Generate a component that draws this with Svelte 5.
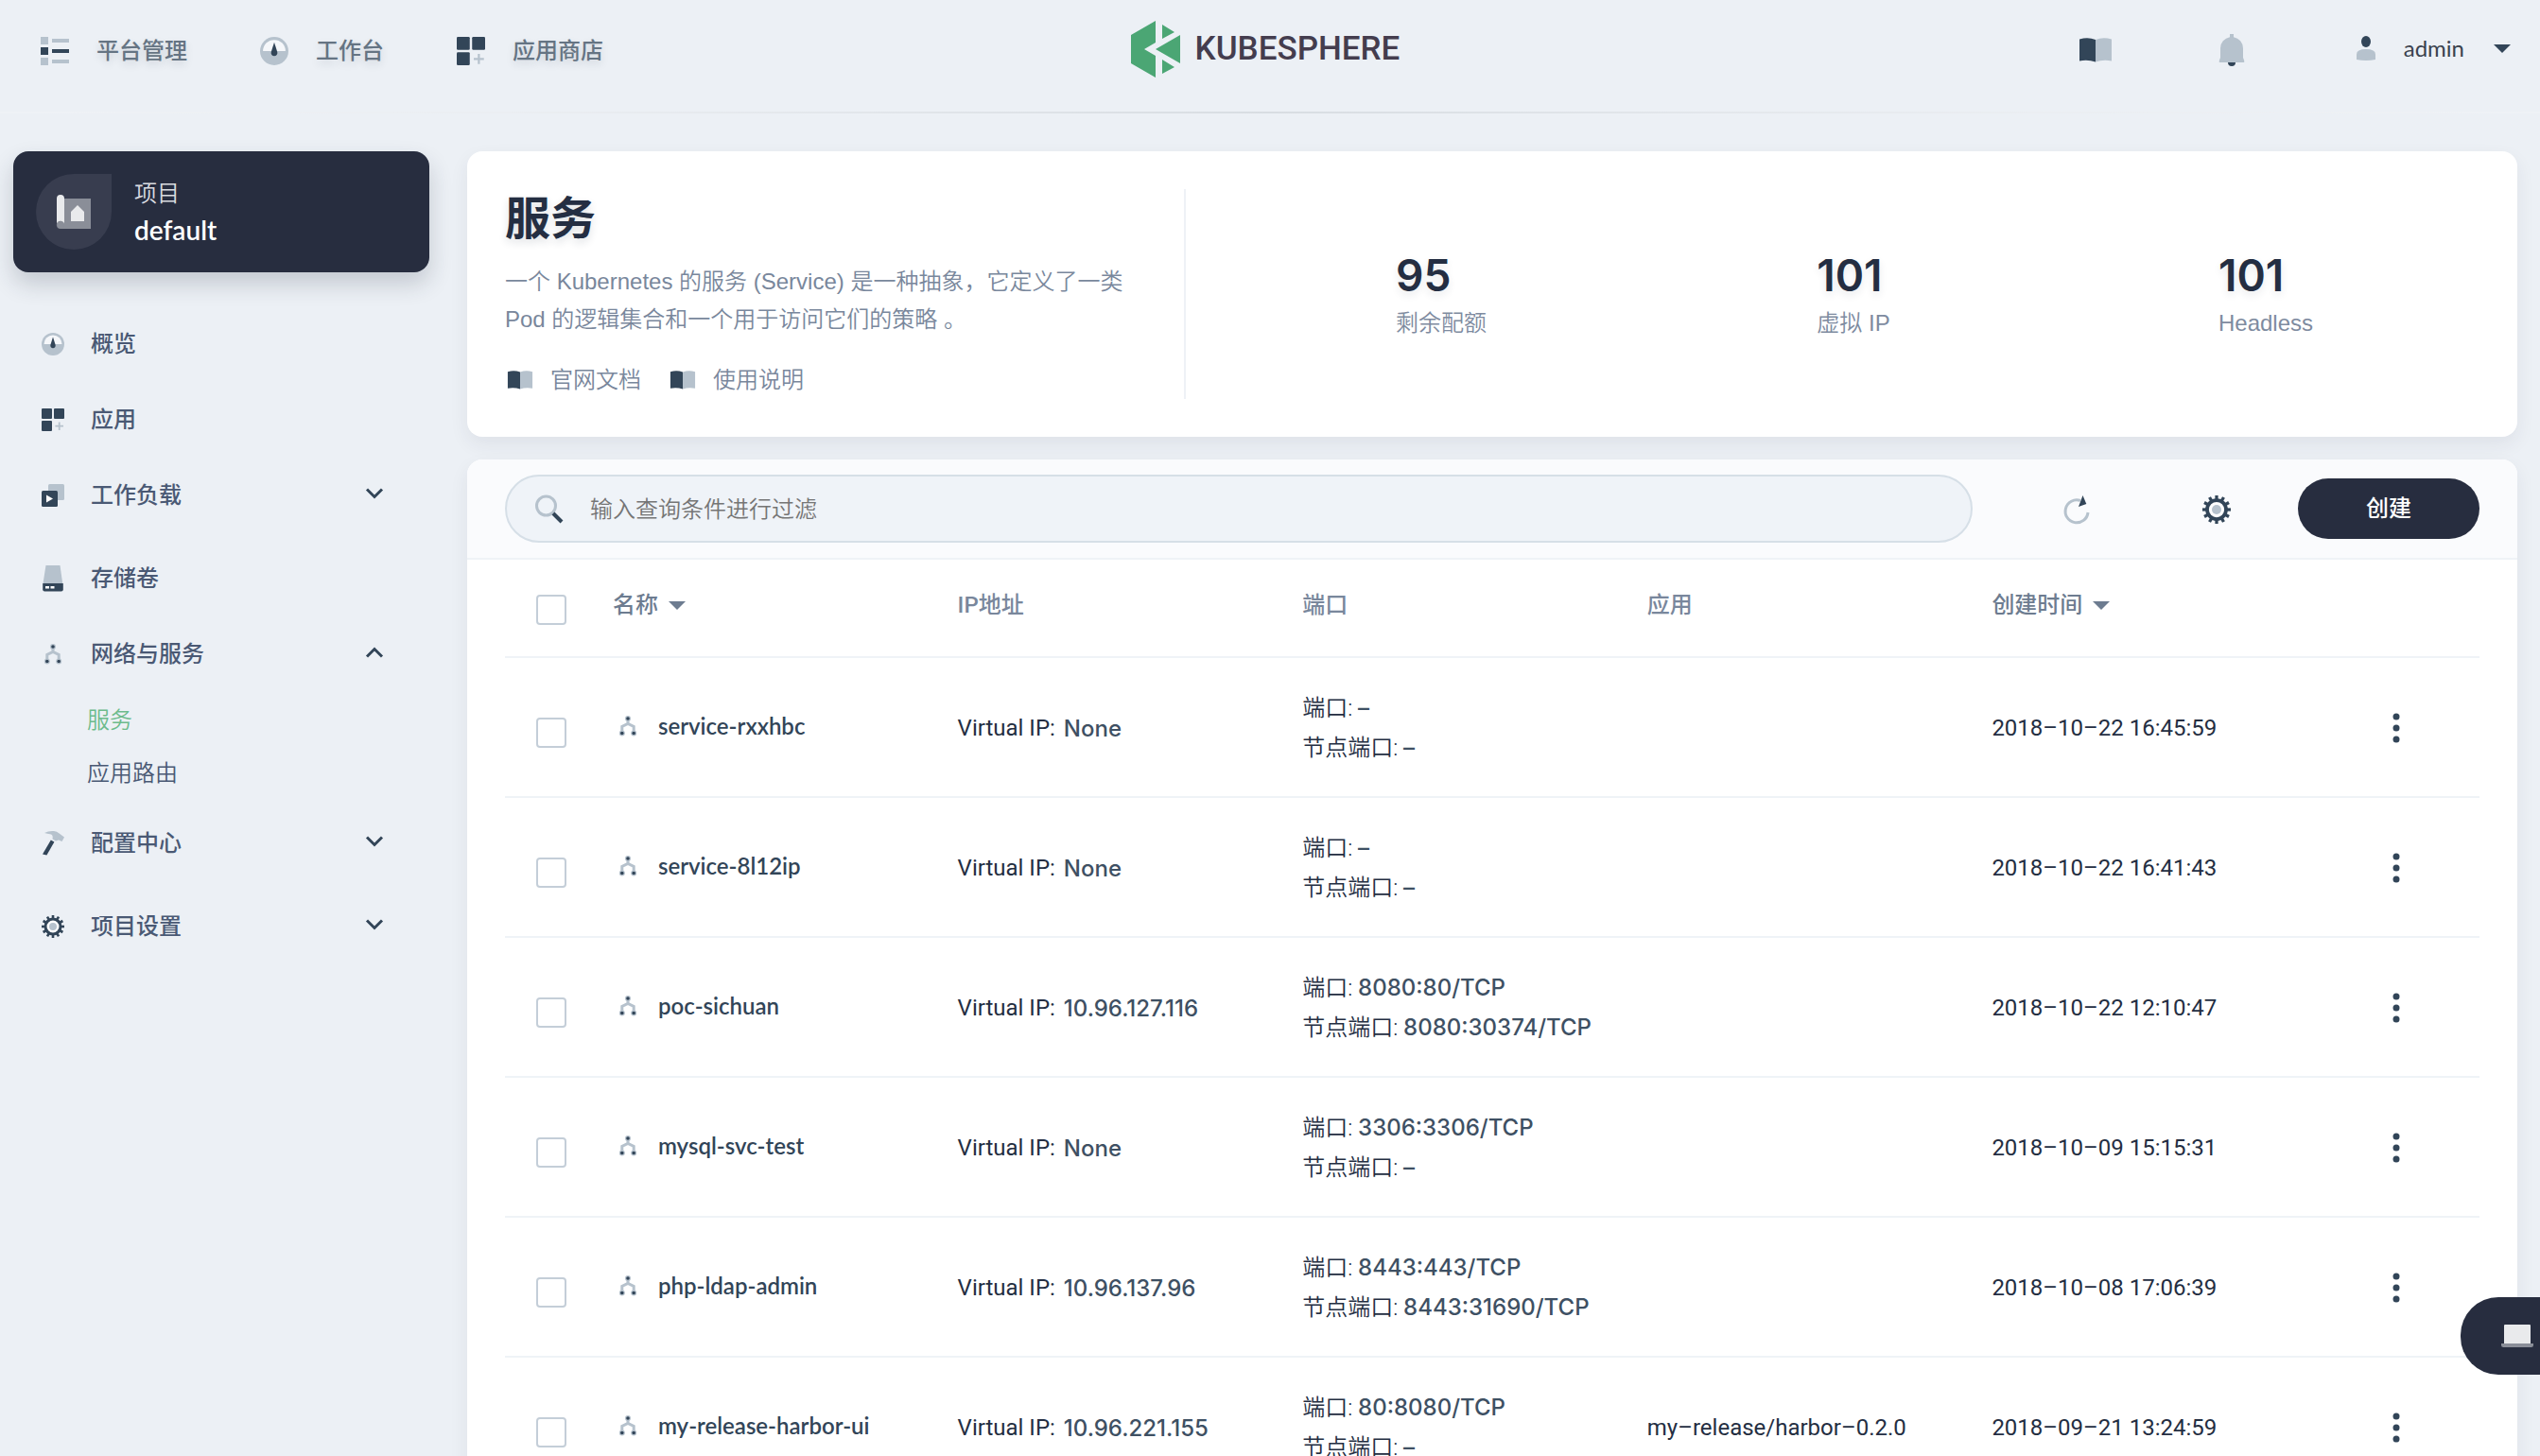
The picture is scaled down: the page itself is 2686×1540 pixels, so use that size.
<script>
  const topLinks = [
    { icon: 'list', label: '平台管理' },
    { icon: 'gauge', label: '工作台' },
    { icon: 'apps', label: '应用商店' }
  ];

  const menu = [
    { icon: 'gauge', label: '概览' },
    { icon: 'apps', label: '应用' },
    { icon: 'workload', label: '工作负载', children: [] },
    { icon: 'disk', label: '存储卷' },
    {
      icon: 'network',
      label: '网络与服务',
      open: true,
      children: [{ label: '服务', active: true }, { label: '应用路由' }]
    },
    { icon: 'hammer', label: '配置中心', children: [] },
    { icon: 'gear', label: '项目设置', children: [] }
  ];

  const stats = [
    { value: '95', label: '剩余配额' },
    { value: '101', label: '虚拟 IP' },
    { value: '101', label: 'Headless' }
  ];

  const services = [
    { name: 'service-rxxhbc', ip: 'None', port: '–', nodePort: '–', app: '', time: '2018–10–22 16:45:59' },
    { name: 'service-8l12ip', ip: 'None', port: '–', nodePort: '–', app: '', time: '2018–10–22 16:41:43' },
    { name: 'poc-sichuan', ip: '10.96.127.116', port: '8080:80/TCP', nodePort: '8080:30374/TCP', app: '', time: '2018–10–22 12:10:47' },
    { name: 'mysql-svc-test', ip: 'None', port: '3306:3306/TCP', nodePort: '–', app: '', time: '2018–10–09 15:15:31' },
    { name: 'php-ldap-admin', ip: '10.96.137.96', port: '8443:443/TCP', nodePort: '8443:31690/TCP', app: '', time: '2018–10–08 17:06:39' },
    { name: 'my-release-harbor-ui', ip: '10.96.221.155', port: '80:8080/TCP', nodePort: '–', app: 'my–release/harbor–0.2.0', time: '2018–09–21 13:24:59' }
  ];

  const teeth = Array.from({ length: 12 }, (_, i) => i * 30);
</script>

{#snippet icon(name)}
  {#if name === 'list'}
    <svg class="icon" viewBox="0 0 30 30" aria-hidden="true">
      <path class="light" d="M0 0h8v8H0zM0 22h8v8H0zM12 2h18v4H12zM12 24h18v4H12z" />
      <path class="dark" d="M0 11h8v8H0zM12 13h18v4H12z" />
    </svg>
  {:else if name === 'gauge'}
    <svg class="icon" viewBox="0 0 24 24" aria-hidden="true">
      <circle class="light" cx="12" cy="12" r="12" />
      <path class="pale" d="M2.5 12a9.5 9.5 0 0 1 19 0z" />
      <path class="dark" d="M12 4.5l2.6 8.3a2.7 2.7 0 1 1-5.2 0z" />
    </svg>
  {:else if name === 'apps'}
    <svg class="icon" viewBox="0 0 24 24" aria-hidden="true">
      <rect class="dark" width="11" height="11" rx="1" />
      <rect class="dark" x="13" width="11" height="11" rx="1" />
      <rect class="dark" y="13" width="11" height="11" rx="1" />
      <path class="light" d="M17.8 14.4h1.8v3.4H23v1.8h-3.4V23h-1.8v-3.4h-3.4v-1.8h3.4z" />
    </svg>
  {:else if name === 'workload'}
    <svg class="icon" viewBox="0 0 24 24" aria-hidden="true">
      <rect class="light" x="7" width="17" height="17" rx="1.5" />
      <rect class="dark" y="7" width="17" height="17" rx="1.5" />
      <path class="white" d="M5 11.5l7 4-7 4z" />
    </svg>
  {:else if name === 'disk'}
    <svg class="icon tall" viewBox="0 0 24 28" aria-hidden="true">
      <path class="light" d="M4.5 0h15l2.7 19H1.5z" />
      <path class="dark" d="M1.2 19h21.6v6.5a2 2 0 0 1-2 2H3.2a2 2 0 0 1-2-2z" />
      <path class="white" d="M4 22h4v2.6H4zM9.5 22h4v2.6h-4z" />
    </svg>
  {:else if name === 'network'}
    <svg class="icon" viewBox="0 0 24 24" aria-hidden="true">
      <path class="light-line" d="M12 3.5V10M5.8 18v-5.5l6.2-3 6.2 3V18" />
      <circle class="light" cx="12" cy="4" r="3" />
      <circle class="light" cx="5.8" cy="19.5" r="3" />
      <circle class="light" cx="18.2" cy="19.5" r="3" />
      <circle class="dark" cx="12" cy="4" r="1.8" />
      <circle class="dark" cx="5.8" cy="19.5" r="1.8" />
      <circle class="dark" cx="18.2" cy="19.5" r="1.8" />
    </svg>
  {:else if name === 'hammer'}
    <svg class="icon tall" viewBox="0 0 24 28" aria-hidden="true">
      <path class="light" d="M3 3Q7.5.5 13 1q3 .4 6 2.7l5 3.8-2.5 4.5-3.5-1.5-3 1-3.5-2Q12.5 4.5 9 4.2 6 3.8 3 3z" />
      <path class="dark" d="M9.8 10.5l3.6 2.1-8 14L1 25.500z" />
    </svg>
  {:else if name === 'gear'}
    <svg class="icon" viewBox="0 0 24 24" aria-hidden="true">
      {#each teeth as angle}
        <rect class="dark" x="10.7" y="0" width="2.6" height="5" transform="rotate({angle} 12 12)" />
      {/each}
      <circle class="gear-ring" cx="12" cy="12" r="8" />
      <circle class="light" cx="12" cy="12" r="4" />
    </svg>
  {:else if name === 'book'}
    <svg class="icon book" viewBox="0 0 34 26" aria-hidden="true">
      <path class="dark" d="M0 1.5Q9-1.2 17 2v23.5Q9 22.8 0 24.5z" />
      <path class="light" d="M34 1.5Q25-1.2 17 2v23.5q8-2.7 17-1z" />
    </svg>
  {:else if name === 'bell'}
    <svg class="icon" viewBox="0 0 26 34" aria-hidden="true">
      <path class="light" d="M11 0h4v3.2A12 12 0 0 1 25 15v10l1.2 3v2H-.2v-2L1 25V15A12 12 0 0 1 11 3.2z" />
      <path class="dark" d="M9 30h8a4 4 0 0 1-8 0z" />
    </svg>
  {:else if name === 'user'}
    <svg class="icon" viewBox="0 0 20 26" aria-hidden="true">
      <ellipse class="dark" cx="10" cy="6" rx="5" ry="6" />
      <path class="light" d="M0 25v-5.5Q0 14 10 14t10 5.5V25Q10 26.8 0 25z" />
    </svg>
  {:else if name === 'search'}
    <svg class="icon" viewBox="0 0 30 30" aria-hidden="true">
      <circle class="lens" cx="11.5" cy="12" r="10" />
      <path class="handle" d="M19 20l9 9" />
    </svg>
  {:else if name === 'refresh'}
    <svg class="icon" viewBox="0 0 30 30" aria-hidden="true">
      <path class="arc" d="M19 5.5A12 12 0 1 0 27 18" />
      <path class="dark" d="M21.5 0l3.8 9L17 12z" />
    </svg>
  {:else if name === 'chevron'}
    <svg class="chevron" viewBox="0 0 18 12" aria-hidden="true">
      <path d="M1 1.5l8 8 8-8" />
    </svg>
  {:else if name === 'caret'}
    <svg class="caret" viewBox="0 0 18 9" aria-hidden="true">
      <path d="M0 0h18l-9 9z" />
    </svg>
  {/if}
{/snippet}

<div class="page">
  <header class="topbar">
    <nav class="top-links" aria-label="主导航">
      {#each topLinks as link}
        <a class="top-link" href="#top">
          {@render icon(link.icon)}
          <span>{link.label}</span>
        </a>
      {/each}
    </nav>
    <a class="brand" href="#home">
      <svg viewBox="0 0 52 60" aria-hidden="true">
        <path d="M0 15L26 0v23L14 30l12 7v23L0 45zM33 4l13 8-13 7zM33 41l13 8-13 7zM52 15v30L26 30z" />
      </svg>
      <span>KUBESPHERE</span>
    </a>
    <div class="account">
      <button class="docs" aria-label="文档">{@render icon('book')}</button>
      <button class="notices" aria-label="通知">{@render icon('bell')}</button>
      <button class="user">
        {@render icon('user')}
        <span>admin</span>
        {@render icon('caret')}
      </button>
    </div>
  </header>

  <div class="body">
    <aside>
      <div class="project">
        <div class="project-icon">
          <svg viewBox="0 0 36 36" aria-hidden="true">
            <path class="sheet" d="M6 4h30v32H4z" />
            <path class="roll" d="M0 4a4 4 0 0 1 8 0v27a4 4 0 0 0-8 2z" />
            <circle class="sheet" cx="4" cy="32" r="4" />
            <path class="roll" d="M22 11l7 7v10H15V18z" />
          </svg>
        </div>
        <div class="project-text">
          <span class="project-kind">项目</span>
          <strong>default</strong>
        </div>
      </div>
      <nav class="menu" aria-label="项目导航">
        {#each menu as item}
          <a class="menu-item" href="#menu">
            {@render icon(item.icon)}
            <span>{item.label}</span>
            {#if item.children}
              <span class="toggle" class:open={item.open}>{@render icon('chevron')}</span>
            {/if}
          </a>
          {#if item.children}
            <div class="submenu">
              {#each item.children as child}
                <a class:active={child.active} href="#menu">{child.label}</a>
              {/each}
            </div>
          {/if}
        {/each}
      </nav>
    </aside>

    <main>
      <section class="card summary">
        <div class="intro">
          <h1>服务</h1>
          <p>一个 Kubernetes 的服务 (Service) 是一种抽象，它定义了一类 Pod 的逻辑集合和一个用于访问它们的策略 。</p>
          <div class="doc-links">
            <a href="#docs">{@render icon('book')}<span>官网文档</span></a>
            <a href="#guide">{@render icon('book')}<span>使用说明</span></a>
          </div>
        </div>
        <div class="stats">
          {#each stats as stat}
            <div class="stat">
              <div>
                <strong>{stat.value}</strong>
                <span>{stat.label}</span>
              </div>
            </div>
          {/each}
        </div>
      </section>

      <section class="card listing">
        <div class="toolbar">
          <label class="search">
            {@render icon('search')}
            <input type="text" placeholder="输入查询条件进行过滤" aria-label="过滤" />
          </label>
          <div class="tools">
            <button aria-label="刷新">{@render icon('refresh')}</button>
            <button aria-label="设置">{@render icon('gear')}</button>
          </div>
          <button class="create">创建</button>
        </div>
        <div class="table-wrap">
          <table>
            <colgroup>
              <col class="col-check" />
              <col span="5" />
              <col class="col-more" />
            </colgroup>
            <thead>
              <tr>
                <th><input type="checkbox" aria-label="全选" /></th>
                <th><button class="sort">名称{@render icon('caret')}</button></th>
                <th>IP地址</th>
                <th>端口</th>
                <th>应用</th>
                <th><button class="sort">创建时间{@render icon('caret')}</button></th>
                <th></th>
              </tr>
            </thead>
            <tbody>
              {#each services as service}
                <tr>
                  <td><input type="checkbox" aria-label={service.name} /></td>
                  <td><a class="name" href="#service">{@render icon('network')}<span>{service.name}</span></a></td>
                  <td><div class="ip"><span>Virtual IP:</span><b>{service.ip}</b></div></td>
                  <td>
                    <div class="port">端口: <b>{service.port}</b></div>
                    <div class="port">节点端口: <b>{service.nodePort}</b></div>
                  </td>
                  <td>{service.app}</td>
                  <td>{service.time}</td>
                  <td>
                    <button class="more" aria-label="更多操作">
                      <svg viewBox="0 0 8 32" aria-hidden="true">
                        <circle cx="4" cy="4" r="3.5" /><circle cx="4" cy="16" r="3.5" /><circle cx="4" cy="28" r="3.5" />
                      </svg>
                    </button>
                  </td>
                </tr>
              {/each}
            </tbody>
          </table>
        </div>
      </section>
    </main>
  </div>

  <button class="terminal" aria-label="终端">
    <svg viewBox="0 0 34 24" aria-hidden="true">
      <rect class="roll" x="3" width="28" height="21" rx="1" />
      <path class="sheet" d="M0 20h34v1.5a2.5 2.5 0 0 1-2.5 2.5h-29A2.5 2.5 0 0 1 0 21.5z" />
    </svg>
  </button>
</div>

<style>
  :global(body) {
    background: #ecf0f5;
  }

  .page {
    box-sizing: border-box;
    height: 100vh;
    overflow: hidden auto;
    scrollbar-width: none;
    background: #ecf0f5;
    color: #242e42;
    font: 350 24px/40px 'Liberation Sans', 'Noto Sans CJK SC', sans-serif;
  }

  .page :global(*) {
    box-sizing: border-box;
  }

  a {
    color: inherit;
    text-decoration: none;
  }

  button {
    padding: 0;
    border: 0;
    background: none;
    color: inherit;
    font: inherit;
    cursor: pointer;
  }

  svg {
    display: block;
    flex: none;
    overflow: visible;
  }

  .icon {
    width: 24px;
    height: 24px;
  }

  .icon.tall {
    height: 28px;
  }

  .light { fill: #b6c2cd; }
  .dark { fill: #324558; }
  .pale { fill: #f5f7fa; }
  .white { fill: #fff; }
  .sheet { fill: #8a8e98; }
  .roll { fill: #e9eaec; }

  .light-line {
    fill: none;
    stroke: #b6c2cd;
    stroke-width: 3;
  }

  .gear-ring {
    fill: #fff;
    stroke: #324558;
    stroke-width: 3;
  }

  .lens,
  .arc {
    fill: none;
    stroke: #b6c2cd;
    stroke-width: 3;
  }

  .handle {
    stroke: #324558;
    stroke-width: 4;
  }

  .chevron {
    width: 18px;
    height: 12px;
    fill: none;
    stroke: #324558;
    stroke-width: 3;
  }

  .caret {
    width: 18px;
    height: 9px;
    fill: currentColor;
  }

  /* Top bar */
  .topbar {
    display: grid;
    grid-template-columns: 1fr auto 1fr;
    align-items: center;
    height: 120px;
    padding: 0 31px 16px 43px;
    border-bottom: 2px solid;
    border-image: linear-gradient(90deg, #eff2f6, #ebeef2 20%, #d8dde2 50%, #ebeef2 80%, #eff2f6) 1;
  }

  .top-links {
    display: flex;
    gap: 77px;
    padding-top: 6px;
  }

  .top-link {
    display: flex;
    align-items: center;
    gap: 29px;
    color: #657483;
    font-weight: 500;
    text-shadow: 0 4px 8px rgba(36, 46, 66, 0.15);
  }

  .top-link .icon {
    width: 30px;
    height: 30px;
  }

  .brand {
    display: flex;
    align-items: center;
    gap: 16px;
    padding: 2px 22px 0 0;
    color: #443d4e;
    font: 500 35px/60px Roboto, sans-serif;
  }

  .brand svg {
    width: 52px;
    height: 60px;
    fill: #4ba674;
  }

  .account {
    display: flex;
    justify-content: flex-end;
    align-items: center;
  }

  .docs,
  .notices {
    padding-top: 4px;
  }

  .docs {
    margin-right: 114px;
  }

  .docs .icon {
    width: 34px;
    height: 26px;
  }

  .notices {
    margin-right: 119px;
  }

  .notices .icon {
    width: 26px;
    height: 34px;
  }

  .user {
    display: flex;
    align-items: center;
    color: #3b434f;
    font-family: Lato, sans-serif;
    font-weight: 400;
  }

  .user .icon {
    width: 20px;
    height: 26px;
  }

  .user span {
    margin: 0 31px 0 30px;
  }

  .user .caret {
    color: #324558;
  }

  /* Layout */
  .body {
    display: grid;
    grid-template-columns: 440px minmax(0, 1fr);
    gap: 40px;
    padding: 40px 24px 0 14px;
  }

  /* Sidebar */
  .project {
    display: flex;
    align-items: center;
    gap: 24px;
    height: 128px;
    padding: 0 24px;
    border-radius: 16px;
    background: #272d3f;
    box-shadow: 0 12px 24px rgba(36, 46, 66, 0.2);
    color: #fff;
  }

  .project-icon {
    display: grid;
    place-items: center;
    width: 80px;
    height: 80px;
    border-radius: 50% 0 50% 50%;
    background: #383d4f;
  }

  .project-icon svg {
    width: 36px;
    height: 36px;
  }

  .project-text {
    display: flex;
    flex-direction: column;
    padding-bottom: 2px;
  }

  .project-kind {
    color: #d9dbe0;
  }

  .project strong {
    font: 600 28px/36px Lato, sans-serif;
  }

  .menu {
    display: flex;
    flex-direction: column;
    padding: 36px 0 0 30px;
    color: #4a5974;
  }

  .menu-item {
    display: flex;
    align-items: center;
    gap: 28px;
    height: 80px;
    padding-right: 49px;
    font-weight: 500;
  }

  .toggle {
    margin-left: auto;
    padding-bottom: 4px;
  }

  .toggle.open .chevron {
    transform: rotate(180deg);
  }

  .submenu {
    padding: 2px 0 6px 48px;
  }

  .submenu a {
    display: block;
    line-height: 56px;
  }

  .submenu a.active {
    color: #6dbb8c;
  }

  /* Cards */
  main {
    display: flex;
    flex-direction: column;
    gap: 24px;
  }

  .card {
    border-radius: 16px;
    background: #fff;
    box-shadow: 0 8px 20px rgba(36, 46, 66, 0.07);
  }

  .summary {
    display: flex;
    padding: 40px;
  }

  .intro {
    width: 720px;
    padding-right: 48px;
    border-right: 2px solid #eef1f6;
    color: #79879c;
  }

  h1 {
    margin: 0;
    color: #242e42;
    font-size: 48px;
    font-weight: 700;
    line-height: 64px;
    text-shadow: 0 4px 8px rgba(36, 46, 66, 0.15);
  }

  .intro p {
    margin: 14px 0 24px;
  }

  .doc-links {
    display: flex;
    gap: 30px;
    padding-left: 2px;
  }

  .doc-links a {
    display: flex;
    align-items: center;
    gap: 18px;
  }

  .doc-links .icon {
    width: 28px;
    height: 20px;
  }

  .stats {
    display: flex;
    flex: 1;
    align-items: center;
    padding: 0 8px 0 52px;
  }

  .stat {
    display: flex;
    flex: 1;
    justify-content: center;
  }

  .stat strong {
    display: block;
    font: 600 46px/62px Inter, sans-serif;
    text-shadow: 0 4px 8px rgba(36, 46, 66, 0.1);
  }

  .stat span {
    display: block;
    color: #7e8ba0;
  }

  /* Toolbar */
  .listing {
    overflow: hidden;
  }

  .toolbar {
    display: flex;
    align-items: center;
    height: 106px;
    padding: 0 40px;
    border-bottom: 2px solid #eff3f7;
    background: #fafbfd;
  }

  .search {
    display: flex;
    flex: 1;
    align-items: center;
    gap: 28px;
    height: 72px;
    padding: 0 30px;
    border: 2px solid #d6dfe7;
    border-radius: 36px;
    background: #eff3f8;
  }

  .search .icon {
    width: 30px;
    height: 30px;
  }

  .search input {
    flex: 1;
    height: 60px;
    padding: 2px 0 0;
    border: 0;
    outline: 0;
    background: none;
    color: #242e42;
    font: inherit;
  }

  .search input::placeholder {
    color: #757575;
  }

  .tools {
    display: flex;
    justify-content: space-between;
    width: 344px;
    padding: 2px 71px 0 95px;
  }

  .tools .icon {
    width: 30px;
    height: 30px;
  }

  .create {
    width: 192px;
    height: 64px;
    border-radius: 32px;
    background: #272d3f;
    color: #fff;
    font-weight: 500;
  }

  /* Table */
  .table-wrap {
    padding: 0 40px;
  }

  table {
    width: 100%;
    border-collapse: separate;
    border-spacing: 0;
    table-layout: fixed;
    font-family: Roboto, 'Noto Sans CJK SC', sans-serif;
  }

  .col-check { width: 114px; }
  .col-more { width: 151px; }

  th,
  td {
    padding: 0;
    border-bottom: 2px solid #eff3f7;
    text-align: left;
    white-space: nowrap;
  }

  th {
    height: 104px;
    padding-bottom: 6px;
    color: #79879c;
    font-weight: 500;
  }

  td {
    height: 148px;
    padding-top: 2px;
    font-weight: 400;
  }

  input[type='checkbox'] {
    display: block;
    appearance: none;
    width: 32px;
    height: 32px;
    margin: 10px 0 0 33px;
    border: 2px solid #c4ced8;
    border-radius: 4px;
    background: #fff;
  }

  .sort {
    display: flex;
    align-items: center;
    gap: 11px;
    color: #6d7c90;
    font-weight: 500;
  }

  .name {
    display: flex;
    align-items: center;
    gap: 20px;
    padding: 0 0 4px 4px;
    color: #324558;
    font: 600 24px/40px Lato, sans-serif;
  }

  .ip {
    display: flex;
    align-items: center;
    gap: 9px;
  }

  .ip b {
    padding-top: 2px;
  }

  b {
    color: #3e5063;
    font: 500 24px/40px Inter, sans-serif;
  }

  .port {
    font-weight: 350;
    line-height: 42px;
  }

  .more {
    display: block;
    padding: 8px;
    margin-left: 51px;
  }

  .more svg {
    width: 8px;
    height: 32px;
    fill: #324558;
  }

  /* Floating terminal tab, pinned to the window's right edge */
  .terminal {
    position: fixed;
    right: 0;
    bottom: 86px;
    width: 84px;
    height: 82px;
    padding-left: 43px;
    border-radius: 40px 0 0 40px;
    background: #272d3f;
  }

  .terminal svg {
    width: 34px;
    height: 24px;
  }
</style>
